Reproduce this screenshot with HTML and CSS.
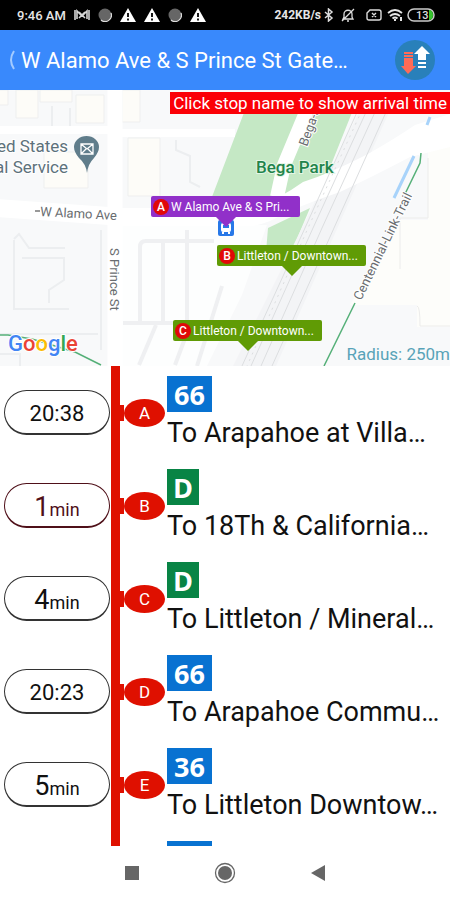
FILE: index.html
```html
<!DOCTYPE html>
<html lang="en">
<head>
<meta charset="utf-8">
<meta name="viewport" content="width=device-width, initial-scale=1">
<title>Stop arrivals</title>
<link rel="stylesheet" href="styles.css">
</head>
<body>
<div class="status">
  <div class="status-left">
    <span class="clock">9:46 AM</span>
    <svg width="16" height="12" viewBox="0 0 16 12" fill="none" stroke="#d5d5d5" stroke-width="1.6"><path d="M3 10V2l5 5 5-5v8M1 1v10M15 1v10M5 9l6-6M11 9 5 3"/></svg>
    <svg width="14" height="14" viewBox="0 0 14 14"><circle cx="7" cy="7" r="6.5" fill="#666"/><path d="M3 12a6.3 6.3 0 0 0 10-7" fill="none" stroke="#ddd" stroke-width="1.2"/></svg>
    <svg width="16" height="14" viewBox="0 0 16 14"><path d="M8 0 16 14H0z" fill="#fff"/><path d="M8 5v4M8 10.500v2" stroke="#000" stroke-width="1.8"/></svg>
    <svg width="16" height="14" viewBox="0 0 16 14"><path d="M8 0 16 14H0z" fill="#fff"/><path d="M8 5v4M8 10.500v2" stroke="#000" stroke-width="1.8"/></svg>
    <svg width="14" height="14" viewBox="0 0 14 14"><circle cx="7" cy="7" r="6.500" fill="#666"/><path d="M3 12a6.3 6.3 0 0 0 10-7" fill="none" stroke="#ddd" stroke-width="1.2"/></svg>
    <svg width="16" height="14" viewBox="0 0 16 14"><path d="M8 0 16 14H0z" fill="#fff"/><path d="M8 5v4M8 10.500v2" stroke="#000" stroke-width="1.8"/></svg>
  </div>
  <div class="status-right">
    <span class="speed">242KB/s</span>
    <svg width="10" height="14" viewBox="0 0 10 14" fill="none" stroke="#ddd" stroke-width="1.500"><path d="m1 4 7 6-3.500 3V1L8 4l-7 6"/></svg>
    <svg class="bell" width="14" height="14" viewBox="0 0 14 14" fill="none" stroke="#ddd" stroke-width="1.300"><path d="M2 11h10l-1-2V6c0-5-8-5-8 0v3zM6 13h2M1 13 13 1"/></svg>
    <svg class="sim" width="16" height="12" viewBox="0 0 16 12" fill="none" stroke="#ddd" stroke-width="1.400"><path d="M4 1h9q2 0 2 2v6q0 2-2 2H3q-2 0-2-2V4zM6 4l4 4M10 4 6 8"/></svg>
    <svg width="17" height="14" viewBox="0 0 17 14" fill="none" stroke="#e5e5e5" stroke-width="1.800"><path d="M1 5q7-6 14 0M3 8q5-4 10 0M5.500 10.500q2.500-2 5 0"/><path d="M8 11v2M14 9v4" stroke-width="2"/></svg>
    <svg width="28" height="14" viewBox="0 0 28 14"><rect x="1" y="1" width="26" height="12" rx="6" fill="none" stroke="#ccc" stroke-width="1.500"/><path d="M22 2h1q3 1 3 5t-3 5h-1z" fill="#36c52d"/><text x="9" y="11" class="battery">13</text></svg>
  </div>
</div>

<header class="bar">
  <button class="back" aria-label="Back"><svg width="10" height="20" viewBox="0 0 10 20"><path d="M9 1q-6 9 0 18" fill="none" stroke="#a3cbff" stroke-width="2"/></svg></button>
  <h1 class="title">W Alamo Ave &amp; S Prince St Gate…</h1>
  <button class="swap" aria-label="Reverse direction">
    <svg width="40" height="40" viewBox="0 0 40 40"><circle cx="20" cy="20" r="20" fill="#2980ba"/><path d="M9 12h9v2H9zM9 15h9v2H9zM9 18h9v8h3l-8 8-7-8h3z" fill="#ff6b57"/><path d="m27 6 8 8h-4v6h-8v-6h-4zM23 22h8v2h-8zM23 26h8v2h-8z" fill="#fff"/></svg>
  </button>
</header>

<main class="content">
  <section class="map" aria-label="Map">
    <svg class="map-base" viewBox="0 0 450 276" preserveAspectRatio="xMidYMid slice">
      <rect width="450" height="276" fill="#f8f9fa"/>
      <g fill="#fdfcf8" stroke="#eeefef">
        <path d="M-2 0h10v15H-2zM16 0h22v28H16zM40 0h32v12H40zM76 5h28v28H76zM122 0h18v32h-18zM128 48h32v58h-32zM44 62h44v36H44z"/>
      </g>
      <path d="M14 149l5-5 10 14h36M22 168h42v22l-15 10v13M14 150v69h55M101 140v120M0 244h98M0 264h20v12M52 16v22M70 18v20M176 50v10l14 6v26l10 5" fill="none" stroke="#eceef0" stroke-width="2"/>
      <path d="M450 40h-22v90h-28l-50 85h67v22h33z" fill="#fdfdfa"/>
      <path d="M428 68v60h-28v51M417 216q3 0 3 20h30" fill="none" stroke="#ececeb"/>
      <path d="M122 135h145l-25 70-35 71h-85z" fill="#fff" opacity=".75"/>
      <path d="M245 20h108l-30 75-50 25h-66zM268 138l42-20-17 40-27 4z" fill="#c5e8c5"/>
      <path d="M360 20h30L276 276h-43l60-120z" fill="#f3f4f6"/>
      <path d="M0 40h122M122 43h113" fill="none" stroke="#fff" stroke-width="8"/>
      <path d="m-5 109 128 9h130q25-8 50-26 28-9 65-28 28-16 47-29l35-11v33l-40 10q-38 20-70 35-40 13-70 29-15 6-25 5H123l-128-9z" fill="#fff"/>
      <path d="m307 20-23 55-7 32" fill="none" stroke="#fff" stroke-width="14"/>
      <path d="M115-5v286" stroke="#fff" stroke-width="15"/>
      <path d="M140 233v-76q0-6 6-6h68M163 153v79M187 140v93M123 233h55M156 235l-17 40M190 235l-15 40M222 196l-25 80" fill="none" stroke="#eff0f2" stroke-width="4"/>
      <g fill="none" stroke="#dcdee0">
        <path d="M358 20 305 138 242 276M367 20 313 138 251 276M376 20 322 138 261 276M387 20 334 138 272 276"/>
        <path d="m362 20-54 118-61 138" stroke-dasharray="2 5"/>
      </g>
      <path d="m430 27-3 8M414 66l-20 42" fill="none" stroke="#a8d3fa" stroke-width="3"/>
      <path d="m421 63-1 10-15 31M355 213l-31 63M0 245h8l24 4 43 13 26 13" fill="none" stroke="#55b078" stroke-width="1.500"/>
      <g class="road">
        <text transform="translate(40 126) rotate(3)">W Alamo Ave</text>
        <path d="M35 121h5" stroke="#999"/>
        <text transform="translate(110 158) rotate(90)">S Prince St</text>
        <text transform="translate(307 57) rotate(-70)">Bega-S</text>
        <text transform="translate(361 211) rotate(-64)">Centennial-Link-Trail</text>
      </g>
      <g class="place" text-anchor="end"><text x="68" y="62">United States</text><text x="68" y="83">Postal Service</text></g>
      <path d="M87 83q-1-9-8-15-5-6-5-11a12.500 11 0 0 1 25 0q0 5-5 11-6 6-7 15" fill="#607d8b"/>
      <path d="M81 54h12v10H81zl6 5 6-5M81 64l5-5M93 64l-5-5" fill="none" stroke="#fff" stroke-width="1.300"/>
      <text class="park" x="256" y="83">Bega Park</text>
      <text class="logo" x="8" y="261"><tspan fill="#4285f4">G</tspan><tspan fill="#ea4335">o</tspan><tspan fill="#fbbc05">o</tspan><tspan fill="#4285f4">g</tspan><tspan fill="#34a853">l</tspan><tspan fill="#ea4335">e</tspan></text>
      <g><rect x="218" y="130" width="16" height="16" rx="2" fill="#2778e8"/><rect x="221" y="133" width="10" height="9" rx="2" fill="#fff"/><path d="M223 135h6v3h-6z" fill="#2778e8"/><path d="M223 142v2M229 142v2" stroke="#fff" stroke-width="2"/></g>
    </svg>
    <p class="hint">Click stop name to show arrival time</p>
    <p class="radius">Radius: 250m</p>
    <button class="pin pin-a"><span class="dot">A</span><span>W Alamo Ave &amp; S Pri...</span></button>
    <button class="pin pin-b"><span class="dot">B</span><span>Littleton / Downtown...</span></button>
    <button class="pin pin-c"><span class="dot">C</span><span>Littleton / Downtown...</span></button>
  </section>

  <ol class="stops">
    <li class="stop"><span class="time">20:38</span><span class="rail"><span class="mark">A</span></span><div class="info"><span class="route">66</span><a class="dest" href="#a">To Arapahoe at Villa…</a></div></li>
    <li class="stop"><span class="time soon"><b>1</b>min</span><span class="rail"><span class="mark">B</span></span><div class="info"><span class="route green">D</span><a class="dest" href="#b">To 18Th &amp; California…</a></div></li>
    <li class="stop"><span class="time"><b>4</b>min</span><span class="rail"><span class="mark">C</span></span><div class="info"><span class="route green">D</span><a class="dest" href="#c">To Littleton / Mineral…</a></div></li>
    <li class="stop"><span class="time">20:23</span><span class="rail"><span class="mark">D</span></span><div class="info"><span class="route">66</span><a class="dest" href="#d">To Arapahoe Commu…</a></div></li>
    <li class="stop"><span class="time"><b>5</b>min</span><span class="rail"><span class="mark">E</span></span><div class="info"><span class="route">36</span><a class="dest" href="#e">To Littleton Downtow…</a></div></li>
    <li class="stop next"><span></span><span class="rail"></span><div class="info"><span class="route"></span></div></li>
  </ol>
</main>

<nav class="nav">
  <button aria-label="Recent apps"><svg width="14" height="14" viewBox="0 0 14 14"><path d="M0 0h14v14H0z" fill="#666"/></svg></button>
  <button aria-label="Home"><svg width="22" height="22" viewBox="0 0 22 22"><circle cx="11" cy="11" r="9.500" fill="none" stroke="#666" stroke-width="1.300"/><circle cx="11" cy="11" r="7" fill="#666"/></svg></button>
  <button aria-label="Go back"><svg width="14" height="16" viewBox="0 0 14 16"><path d="M14 0v16L0 8z" fill="#666"/></svg></button>
</nav>
</body>
</html>
```
FILE: styles.css
```css
* { box-sizing: border-box; }
body {
  margin: 0;
  height: 100vh;
  display: flex;
  flex-direction: column;
  background: #fff;
  color: #111;
  font-family: Roboto, "Liberation Sans", sans-serif;
}
button { border: 0; padding: 0; background: none; font: inherit; color: inherit; }
svg { display: block; }
p, h1, ol { margin: 0; }

.status {
  flex: none;
  height: 30px;
  padding: 0 15px 0 17px;
  display: flex;
  justify-content: space-between;
  align-items: center;
  background: #000;
  color: #e6e6e6;
  font-size: 13px;
  font-weight: 500;
}
.status-left { display: flex; align-items: center; gap: 8px; }
.status-right { display: flex; align-items: center; gap: 3px; }
.bell { margin-left: 4px; }
.sim { margin: 0 2px 0 8px; }
.battery { font-size: 11px; fill: #ddd; }
.speed { font-size: 12px; font-weight: 700; }

.bar {
  flex: none;
  height: 60px;
  padding: 0 15px 0 5px;
  display: flex;
  align-items: center;
  gap: 6px;
  background: #3989fc;
  color: #fff;
}
.title {
  flex: 1;
  min-width: 0;
  padding-top: 2px;
  font-size: 22px;
  font-weight: 400;
  line-height: 32px;
  white-space: nowrap;
}

.content { flex: 1; min-height: 0; display: flex; flex-direction: column; }
.map { flex: none; height: 276px; position: relative; overflow: hidden; }
.map-base { width: 100%; height: 100%; }
.road { font-size: 13px; fill: #696d70; stroke: #fff; stroke-width: 2px; paint-order: stroke; }
.place { font-size: 17px; fill: #5d717b; stroke: #fff; stroke-width: 2px; paint-order: stroke; }
.park { font-size: 17px; font-weight: 500; fill: #22844b; stroke: #e5f5e6; stroke-width: 2px; paint-order: stroke; }
.logo { font-size: 22px; font-weight: 500; stroke: #fff; stroke-width: 2px; paint-order: stroke; }
.hint {
  position: absolute;
  top: 2px;
  right: 0;
  padding: 0 3px;
  background: #fb0007;
  color: #fff;
  font-size: 17px;
  line-height: 22px;
}
.radius {
  position: absolute;
  right: 0;
  bottom: 1px;
  color: #58a3b8;
  font-size: 17px;
  line-height: 22px;
}
.pin {
  position: absolute;
  width: 149px;
  height: 21px;
  padding: 0 2px;
  display: flex;
  align-items: center;
  gap: 2px;
  border-radius: 2px;
  background: #609b05;
  color: #fff;
  font-size: 12px;
  white-space: nowrap;
}
.pin::after {
  content: "";
  position: absolute;
  top: 100%;
  left: 50%;
  margin-left: -10px;
  border: 10px solid transparent;
  border-top-color: #609b05;
  border-bottom: 0;
}
.dot {
  flex: none;
  width: 16px;
  height: 16px;
  border-radius: 50%;
  background: #e10808;
  font-weight: 500;
  line-height: 16px;
  text-align: center;
}
.pin-a { left: 151px; top: 106px; background: #9130c9; }
.pin-a::after { border-top-color: #9130c9; }
.pin-b { left: 217px; top: 155px; }
.pin-c { left: 173px; top: 230px; }

.stops { flex: 1; min-height: 0; padding: 0; overflow: hidden; list-style: none; }
.stop {
  height: 93px;
  padding-left: 4px;
  display: grid;
  grid-template-columns: 106px 55px 1fr;
  column-gap: 1px;
  align-items: center;
}
.time {
  height: 45px;
  border: 1px solid #333;
  border-bottom-width: 2px;
  border-radius: 23px;
  font-size: 22px;
  line-height: 46px;
  text-align: center;
}
.time b { font-size: 27px; font-weight: 400; }
.time:has(b) { font-size: 18px; }
.soon { color: #4f1019; border-color: #4f1019; }
.rail {
  align-self: stretch;
  display: flex;
  align-items: center;
  background: linear-gradient(#df1000, #df1000) left / 9px 100% no-repeat;
}
.rail:has(.mark)::before { content: ""; width: 13px; height: 16px; background: #df1000; }
.mark {
  width: 41px;
  height: 28px;
  border-radius: 50%;
  background: #df1000;
  color: #fff;
  font-size: 17px;
  line-height: 29px;
  text-align: center;
}
.info { align-self: start; min-width: 0; padding-top: 10px; }
.route {
  display: block;
  width: fit-content;
  height: 36px;
  padding: 0 7px;
  background: #0872d1;
  color: #fff;
  font-family: "Open Sans", "Noto Sans", sans-serif;
  font-size: 27px;
  font-weight: 700;
  line-height: 38px;
}
.green { background: #088445; padding: 0 6px; }
.dest {
  display: block;
  color: #111;
  font-size: 27px;
  line-height: 42px;
  text-decoration: none;
  white-space: nowrap;
}
.next .route { width: 45px; }

.nav {
  flex: none;
  height: 54px;
  padding: 0 86px;
  display: grid;
  grid-template-columns: repeat(3, 1fr);
  justify-items: center;
  align-items: center;
}
```
